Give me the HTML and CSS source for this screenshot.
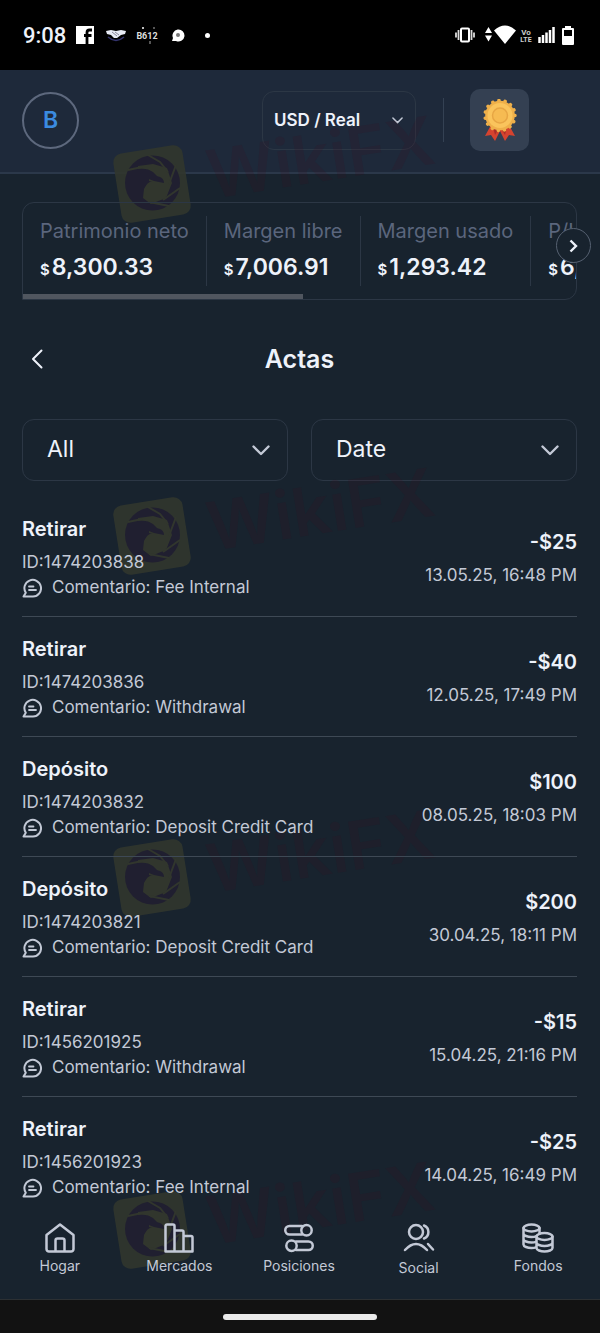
FILE: index.html
```html
<!DOCTYPE html>
<html lang="es">
<head>
  <meta charset="UTF-8" />
  <meta name="viewport" content="width=device-width, initial-scale=1.0" />
  <meta name="theme-color" content="#000000" />
  <title>Actas</title>
  <link rel="stylesheet" href="styles.css">
</head>
<body>
  <svg class="defs" aria-hidden="true">
    <symbol id="icon-down" viewBox="0 0 18 11">
      <path d="M1.5 1.5 9 9l7.5-7.5" fill="none" stroke="currentColor" stroke-width="2.4" stroke-linecap="round" stroke-linejoin="round" />
    </symbol>
    <symbol id="icon-comment" viewBox="0 0 20 20">
      <path d="M1.5 18.5L3.8 14.8A8.3 8.3 0 1 1 11 18.5z" fill="none" stroke="currentColor" stroke-width="2" stroke-linejoin="round" />
      <path d="M7 8.5h4.5M7 12h7" fill="none" stroke="currentColor" stroke-width="1.8" stroke-linecap="round" />
    </symbol>
    <symbol id="watermark" viewBox="0 0 340 130">
      <rect x="7" y="51" width="70" height="70" rx="9" transform="rotate(-9 42 86)" fill="#31362d" fill-opacity="0.9" />
      <circle cx="42.500" cy="85" r="27.500" fill="#201f30" />
      <path d="M28 68l15-2 14 4 5 15-6 15-15 6-8-6 1-9c3-6 6-8 10-8l10 2c0-5-4-6-7-7l-4-4c-4-3-9-4-15-3z" fill="#31362d" />
      <path d="M39 81l5 2-1 1-4-1z" fill="#31362d" />
      <g fill="none" stroke="#31362d" stroke-width="2">
        <path d="M38 57l12 7 8 10M66 67l-7 19M70 90l-17 12M59 108l-20-4" />
        <path d="M18 72l14-3" />
      </g>
      <text class="watermark-text" x="101" y="101" transform="rotate(-9 101 101)">WikiFX</text>
    </symbol>
  </svg>

  <div class="app">
    <div class="status-bar">
      <span class="time">9:08</span>
      <svg width="18" height="18" viewBox="0 0 18 18" aria-hidden="true">
        <rect width="18" height="18" fill="#fff" />
        <path d="M11 18V6.500Q11 4 13.500 4H16M8 9.500h7.500" fill="none" stroke="#000" stroke-width="2.800" />
      </svg>
      <svg class="handshake" width="20" height="14" viewBox="0 0 20 14" aria-hidden="true">
        <path d="M0 3l5-1 5 1 5-1 5 1-1 3-4 1-4 3H8L5 7 1 6z" fill="#e8ebf5" />
        <path d="M2 9q8 7 16 0" fill="none" stroke="#34346e" stroke-width="1.500" />
        <path d="M6 4l5 4M9 4l4 3" stroke="#889" stroke-width="1" />
      </svg>
      <svg class="b612" width="22" height="20" viewBox="0 0 22 20" aria-hidden="true">
        <text x="11" y="14" font-size="9" font-weight="700" text-anchor="middle">B612</text>
        <circle cx="7" cy="3" r="1" fill="#fff" />
        <path d="M14 16v3M18 2v2" stroke="#aaa" />
      </svg>
      <svg class="bubble" width="14" height="14" viewBox="0 0 14 14" aria-hidden="true">
        <path d="M1 13l1-3A6 6 0 1 1 5 13z" fill="#fff" />
        <circle cx="7" cy="7" r="2" fill="#777" />
      </svg>
      <span class="dot"></span>
      <span class="status-space"></span>
      <svg width="20" height="16" viewBox="0 0 20 16" aria-hidden="true">
        <rect x="6" y="1.500" width="8" height="13" rx="1" fill="none" stroke="#fff" stroke-width="2" />
        <path d="M3.500 3v10M16.500 3v10M1 5.500v5M19 5.500v5" stroke="#ddd" stroke-width="1.800" />
      </svg>
      <svg class="wifi" width="31" height="20" viewBox="0 0 31 20" aria-hidden="true">
        <path d="M0 8l3.500-6L7 8zM0 10.500h7L3.500 16.500zM9 5.500Q20 -4.500 31 5.500L20 19z" fill="#fff" />
      </svg>
      <svg class="volte" width="10" height="15" viewBox="0 0 10 15" aria-hidden="true">
        <text x="5" y="7" font-size="8" font-weight="700" text-anchor="middle">Vo</text>
        <text x="5" y="14" font-size="7" font-weight="700" text-anchor="middle">LTE</text>
      </svg>
      <svg class="signal" width="17" height="16" viewBox="0 0 17 16" aria-hidden="true">
        <path d="M1.500 16v-6M5 16V8M8.500 16V5.500M12 16V3M15.500 16V0" stroke="#fff" stroke-width="2.500" />
      </svg>
      <svg class="battery" width="12" height="19" viewBox="0 0 12 19" aria-hidden="true">
        <path d="M3 0h6v2h2q1 0 1 1v15q0 1-1 1H1q-1 0-1-1V3q0-1 1-1h2z" fill="#fff" />
        <path d="M2 4h8v6H2z" fill="#000" />
      </svg>
    </div>

    <header class="topbar">
      <button class="avatar" aria-label="Perfil">B</button>
      <div class="select account">
        <select aria-label="Cuenta">
          <option>USD / Real</option>
        </select>
        <svg width="11" height="7"><use href="#icon-down" /></svg>
      </div>
      <span class="topbar-line"></span>
      <button class="medal" aria-label="Recompensas">
        <svg width="34" height="42" viewBox="0 0 34 42" aria-hidden="true">
          <path d="M8 26L2 37l6-1 4 6 5-10 5 10 4-6 6 1-6-11z" fill="#d5432f" />
          <path d="M10 28l2 8 4-7zM24 28l-2 8-4-7z" fill="#a92e28" />
          <circle cx="17" cy="16.500" r="14.800" fill="#efb04a" />
          <circle cx="17" cy="16.500" r="15" fill="none" stroke="#efb04a" stroke-width="3.500" stroke-linecap="round" stroke-dasharray="0.100 6.180" />
          <circle cx="17" cy="16.500" r="12.500" fill="#fac45c" />
          <circle cx="17" cy="16.500" r="7.500" fill="#f6bb52" stroke="#e7a644" stroke-width="1.500" />
        </svg>
      </button>
    </header>

    <main>
      <section class="stats">
        <div class="stats-track">
          <div class="stat">
            <span class="stat-label">Patrimonio neto</span>
            <span class="stat-value"><small>$</small>8,300.33</span>
          </div>
          <div class="stat">
            <span class="stat-label">Margen libre</span>
            <span class="stat-value"><small>$</small>7,006.91</span>
          </div>
          <div class="stat">
            <span class="stat-label">Margen usado</span>
            <span class="stat-value"><small>$</small>1,293.42</span>
          </div>
          <div class="stat">
            <span class="stat-label">P/L</span>
            <span class="stat-value"><small>$</small>6,</span>
          </div>
          <span class="stats-thumb"></span>
        </div>
        <button class="stats-next" aria-label="Siguiente">
          <svg width="9" height="14" viewBox="0 0 9 14"><path d="M1.500 1.500L7 7l-5.500 5.500" fill="none" stroke="currentColor" stroke-width="2.400" /></svg>
        </button>
      </section>

      <div class="page-title">
        <button class="back" aria-label="Volver">
          <svg width="12" height="20" viewBox="0 0 12 20"><path d="M10.500 1.500L2 10l8.500 8.500" fill="none" stroke="currentColor" stroke-width="2" stroke-linecap="round" stroke-linejoin="round" /></svg>
        </button>
        <h1>Actas</h1>
      </div>

      <div class="filters">
        <div class="select">
          <select aria-label="Tipo">
            <option>All</option>
          </select>
          <svg width="18" height="11"><use href="#icon-down" /></svg>
        </div>
        <div class="select">
          <select aria-label="Fecha">
            <option>Date</option>
          </select>
          <svg width="18" height="11"><use href="#icon-down" /></svg>
        </div>
      </div>

      <ul class="records">
        <li class="record">
          <div>
            <h2>Retirar</h2>
            <p>ID:1474203838</p>
            <p class="comment"><svg width="20" height="20"><use href="#icon-comment" /></svg>Comentario: Fee Internal</p>
          </div>
          <div class="record-side">
            <strong>-$25</strong>
            <time>13.05.25, 16:48 PM</time>
          </div>
        </li>
        <li class="record">
          <div>
            <h2>Retirar</h2>
            <p>ID:1474203836</p>
            <p class="comment"><svg width="20" height="20"><use href="#icon-comment" /></svg>Comentario: Withdrawal</p>
          </div>
          <div class="record-side">
            <strong>-$40</strong>
            <time>12.05.25, 17:49 PM</time>
          </div>
        </li>
        <li class="record">
          <div>
            <h2>Depósito</h2>
            <p>ID:1474203832</p>
            <p class="comment"><svg width="20" height="20"><use href="#icon-comment" /></svg>Comentario: Deposit Credit Card</p>
          </div>
          <div class="record-side">
            <strong>$100</strong>
            <time>08.05.25, 18:03 PM</time>
          </div>
        </li>
        <li class="record">
          <div>
            <h2>Depósito</h2>
            <p>ID:1474203821</p>
            <p class="comment"><svg width="20" height="20"><use href="#icon-comment" /></svg>Comentario: Deposit Credit Card</p>
          </div>
          <div class="record-side">
            <strong>$200</strong>
            <time>30.04.25, 18:11 PM</time>
          </div>
        </li>
        <li class="record">
          <div>
            <h2>Retirar</h2>
            <p>ID:1456201925</p>
            <p class="comment"><svg width="20" height="20"><use href="#icon-comment" /></svg>Comentario: Withdrawal</p>
          </div>
          <div class="record-side">
            <strong>-$15</strong>
            <time>15.04.25, 21:16 PM</time>
          </div>
        </li>
        <li class="record">
          <div>
            <h2>Retirar</h2>
            <p>ID:1456201923</p>
            <p class="comment"><svg width="20" height="20"><use href="#icon-comment" /></svg>Comentario: Fee Internal</p>
          </div>
          <div class="record-side">
            <strong>-$25</strong>
            <time>14.04.25, 16:49 PM</time>
          </div>
        </li>
      </ul>
    </main>

    <div class="watermarks" aria-hidden="true">
      <svg class="mark mark-1"><use href="#watermark" /></svg>
      <svg class="mark mark-2"><use href="#watermark" /></svg>
      <svg class="mark mark-3"><use href="#watermark" /></svg>
      <svg class="mark mark-4"><use href="#watermark" /></svg>
    </div>

    <nav class="tabs">
      <a href="#hogar">
        <svg width="30" height="30" viewBox="0 0 30 30"><path d="M1.500 12L15 1.500 28.500 12v14a2.500 2.500 0 0 1-2.500 2.500H4A2.500 2.500 0 0 1 1.500 26zM10.500 28v-10.500a2 2 0 0 1 2-2h5a2 2 0 0 1 2 2V28" /></svg>
        Hogar
      </a>
      <a href="#mercados">
        <svg width="30" height="30" viewBox="0 0 30 30"><path d="M1.500 28.500V3A1.500 1.500 0 0 1 3 1.500h6A1.500 1.500 0 0 1 10.500 3v25.500zM10.500 7.500H18A1.500 1.500 0 0 1 19.500 9v19.500h-9M19.500 13H27a1.500 1.500 0 0 1 1.500 1.500v14h-9" /></svg>
        Mercados
      </a>
      <a href="#posiciones">
        <svg width="30" height="30" viewBox="0 0 30 30"><path d="M18 3H5.500a4 4 0 0 0 0 8.500H18M12 18.500h12.500a4 4 0 0 1 0 8.500H12" /><circle cx="22.500" cy="7.300" r="5.200" /><circle cx="7.500" cy="22.700" r="5.200" /></svg>
        Posiciones
      </a>
      <a href="#social">
        <svg width="32" height="32" viewBox="0 0 32 32"><circle cx="13" cy="9" r="7" /><path d="M21 2.500a7 7 0 0 1 0 13M2 27q11-12 22 0M25 21l5 5.500" /></svg>
        Social
      </a>
      <a href="#fondos">
        <svg width="32" height="30" viewBox="0 0 32 30"><ellipse cx="9.500" cy="5" rx="8" ry="3.500" /><path d="M1.500 5v16.500c0 2 4 3.500 8 3.500 2 0 3.500-.300 4.500-.700M17.500 5v5M1.500 10.500c0 2 4 3.500 8 3.500 2 0 3.500-.300 4.500-.700M1.500 16c0 2 4 3.500 8 3.500 2 0 3.500-.300 4.500-.700" /><ellipse cx="22.500" cy="13.500" rx="8" ry="3.500" /><path d="M14.500 13.500V25c0 2 4 3.500 8 3.500s8-1.500 8-3.500V13.500M14.500 19.500c0 2 4 3.500 8 3.500s8-1.500 8-3.500" /></svg>
        Fondos
      </a>
    </nav>

    <div class="gesture-bar"><span></span></div>
  </div>
</body>
</html>
```

FILE: styles.css
```css
:root {
  --bg: #18232e;
  --surface: #1e293a;
  --line: #2c3745;
  --divider: #3e4955;
  --text: #eef2fa;
  --soft: #c3c9d6;
  --muted: #5b667d;
  --accent: #3b8be0;
}

* {
  margin: 0;
  padding: 0;
  box-sizing: border-box;
}

body {
  background: var(--bg);
  color: var(--text);
  font-family: 'Inter', sans-serif;
}

button,
select {
  font-family: inherit;
  color: inherit;
  background: none;
  border: none;
}

.defs {
  display: none;
}

.app {
  position: relative;
  z-index: 0;
  min-height: 100vh;
  display: flex;
  flex-direction: column;
  overflow: hidden;
}

/* phone status bar */
.status-bar {
  display: flex;
  align-items: center;
  height: 70px;
  padding: 0 26px 0 23px;
  background: #000;
}

.time {
  margin-right: 10px;
  font-family: 'Roboto', sans-serif;
  font-size: 22px;
  font-weight: 500;
}

.handshake {
  margin-left: 12px;
}

.b612 {
  margin-left: 10px;
  fill: #ddd;
  font-family: 'Roboto', sans-serif;
}

.bubble {
  margin-left: 13px;
}

.dot {
  width: 5px;
  height: 5px;
  margin-left: 20px;
  border-radius: 50%;
  background: #fff;
}

.status-space {
  flex: 1;
}

.wifi {
  margin-left: 10px;
}

.volte {
  margin-left: 5px;
  fill: #ccc;
  font-family: 'Roboto', sans-serif;
  overflow: visible;
}

.signal {
  margin-left: 7px;
}

.battery {
  margin-left: 7px;
}

/* header */
.topbar {
  display: flex;
  align-items: center;
  height: 104px;
  padding: 0 71px 2px 22px;
  background: var(--surface);
  border-bottom: 2px solid #2b384a;
}

.avatar {
  width: 57px;
  height: 57px;
  margin-right: auto;
  border: 2px solid #5d687d;
  border-radius: 50%;
  color: var(--accent);
  font-size: 23px;
  font-weight: 600;
}

.select {
  display: grid;
  align-items: center;
  border: 1px solid var(--line);
  border-radius: 12px;
}

.select select {
  grid-area: 1 / 1;
  width: 100%;
  height: 60px;
  padding: 0 24px 2px;
  appearance: none;
  font-size: 23px;
}

.select svg {
  grid-area: 1 / 1;
  justify-self: end;
  margin-right: 17px;
  color: var(--soft);
  pointer-events: none;
}

.account {
  width: 154px;
}

.account select {
  height: 57px;
  padding: 0 11px;
  font-size: 17px;
  font-weight: 600;
}

.account svg {
  margin-right: 12px;
}

.topbar-line {
  width: 1px;
  height: 44px;
  margin: 0 26px 0 27px;
  background: #344153;
}

.medal {
  display: grid;
  place-items: center;
  width: 59px;
  height: 62px;
  border-radius: 10px;
  background: #344052;
}

main {
  flex: 1;
  padding: 28px 23px 0 22px;
}

/* balances */
.stats {
  position: relative;
}

.stats-track {
  position: relative;
  display: flex;
  height: 98px;
  padding: 13px 0;
  border: 1px solid var(--line);
  border-radius: 12px 12px 12px 0;
  overflow: hidden;
}

.stat {
  display: flex;
  flex-direction: column;
  flex-shrink: 0;
  padding: 0 17px;
  border-right: 1px solid var(--line);
  white-space: nowrap;
}

.stat-label {
  color: var(--muted);
  font-size: 20px;
  line-height: 30px;
}

.stat-value {
  margin-top: 4px;
  font-size: 23px;
  font-weight: 600;
  line-height: 34px;
}

.stat-value small {
  margin-right: 2px;
  font-size: 15px;
}

.stats-thumb {
  position: absolute;
  left: 0;
  bottom: 0;
  width: 280px;
  height: 5px;
  background: #50565f;
}

.stats-next {
  position: absolute;
  top: 26px;
  right: -14px;
  display: grid;
  place-items: center;
  width: 35px;
  height: 35px;
  border: 1px solid #566171;
  border-radius: 50%;
  background: var(--bg);
}

.page-title {
  display: grid;
  grid-template-columns: 30px 1fr 30px;
  align-items: center;
  height: 60px;
  margin-top: 29px;
}

.back {
  display: grid;
  place-items: center;
  height: 40px;
}

.page-title h1 {
  font-size: 25px;
  font-weight: 600;
  text-align: center;
}

.filters {
  display: grid;
  grid-template-columns: 1fr 1fr;
  gap: 23px;
  margin-top: 30px;
}

/* transactions */
.records {
  margin-top: 16px;
  list-style: none;
}

.record {
  display: flex;
  justify-content: space-between;
  align-items: center;
  padding: 20px 0 16px;
  border-bottom: 1px solid var(--divider);
  color: var(--soft);
  font-size: 17px;
  line-height: 25px;
}

.record:last-child {
  padding-bottom: 0;
  border-bottom: none;
}

.record h2,
.record strong {
  margin-bottom: 9px;
  color: var(--text);
  font-size: 20px;
  font-weight: 600;
  line-height: 24px;
}

.comment {
  display: flex;
  align-items: center;
  gap: 10px;
}

.record-side {
  display: flex;
  flex-direction: column;
  align-items: flex-end;
}

/* bottom navigation */
.tabs {
  display: grid;
  grid-template-columns: repeat(5, 1fr);
  height: 100px;
  padding: 23px 2px 0 0;
  border-bottom: 1px solid #2c3033;
}

.tabs a {
  display: flex;
  flex-direction: column;
  align-items: center;
  gap: 2px;
  color: var(--soft);
  font-size: 14px;
  line-height: 22px;
  text-decoration: none;
}

.tabs svg {
  fill: none;
  stroke: currentColor;
  stroke-width: 2.5;
  stroke-linecap: round;
  stroke-linejoin: round;
}

.gesture-bar {
  display: grid;
  place-items: center;
  height: 33px;
  background: #121212;
}

.gesture-bar span {
  width: 154px;
  height: 6px;
  border-radius: 3px;
  background: #ebebeb;
}

/* watermark, kept behind the text */
.watermarks {
  position: absolute;
  inset: 0;
  pointer-events: none;
}

.stats,
.records,
.tabs {
  position: relative;
  z-index: 1;
}

.mark {
  position: absolute;
  left: 110px;
  width: 340px;
  height: 130px;
}

.mark-1 {
  top: 98px;
}

.mark-2 {
  top: 450px;
}

.mark-3 {
  top: 792px;
}

.mark-4 {
  top: 1144px;
}

.watermark-text {
  fill: #400e1e;
  fill-opacity: 0.17;
  font-family: 'Inter', sans-serif;
  font-size: 67px;
  font-weight: 600;
}
```
